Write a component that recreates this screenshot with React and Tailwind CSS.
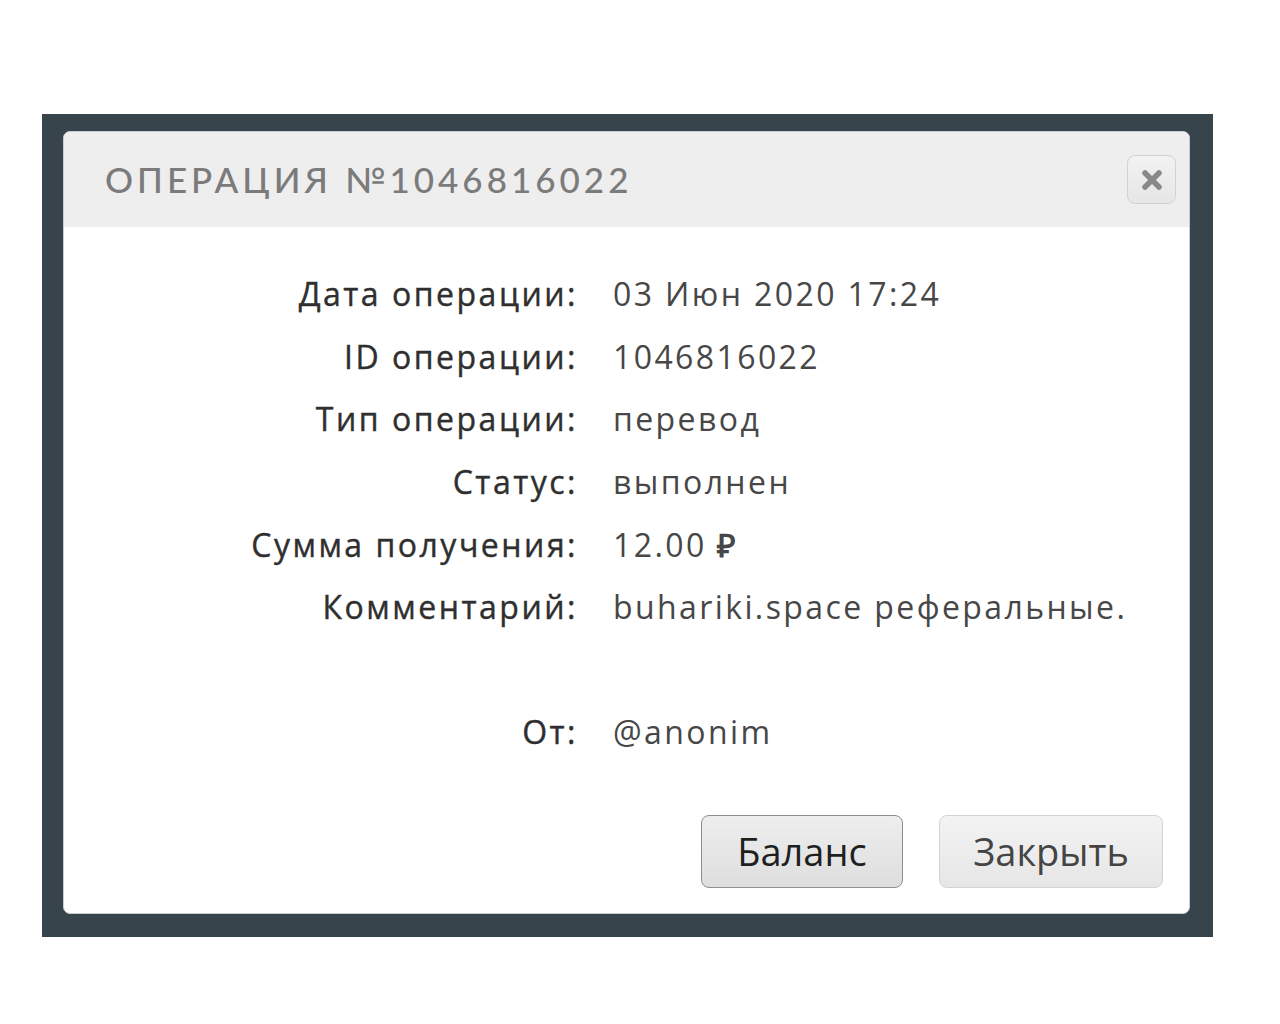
const rows = [
  ["Дата операции:", "03 Июн 2020 17:24"],
  ["ID операции:", "1046816022"],
  ["Тип операции:", "перевод"],
  ["Статус:", "выполнен"],
  ["Сумма получения:", <>12.00 <span className="font-bold">₽</span></>],
  ["Комментарий:", "buhariki.space реферальные."],
  ["", ""],
  ["От:", "@anonim"],
];

function CloseIcon() {
  return (
    <svg width="24" height="24" viewBox="0 0 24 24">
      <path d="M5 5 L19 19 M19 5 L5 19" stroke="#888888" strokeWidth="5.5" strokeLinecap="round" />
    </svg>
  );
}

export default function App() {
  return (
    <div className="w-[1280px] h-[1024px] bg-white pt-[114px] pl-[42px]">
      <div className="w-[1171px] h-[823px] bg-[#37444c] pt-[17px] pl-[21px]">
        <div className="w-[1127px] h-[783px] bg-white rounded-[7px] border border-[#c9cdd0] overflow-hidden flex flex-col">
          {/* header */}
          <div className="h-[95px] bg-[#eeeeef] flex items-center justify-between pl-[41px] pr-[13px]">
            <h1
              className="text-[35px] text-[#7b7b7b] tracking-[4px] font-medium"
              style={{ fontFamily: "Lato, 'Open Sans', sans-serif" }}
            >
              ОПЕРАЦИЯ №1046816022
            </h1>
            <button className="w-[49px] h-[49px] rounded-[8px] border border-[#d2d2d2] bg-gradient-to-b from-[#f2f2f2] to-[#e6e6e6] flex items-center justify-center">
              <CloseIcon />
            </button>
          </div>

          {/* details */}
          <div
            className="pt-[36px] grid grid-cols-[514px_1fr] gap-x-[35px]"
            style={{ fontFamily: "'Open Sans', sans-serif" }}
          >
            {rows.map(([label, value], i) => (
              <div key={i} className="contents">
                <div className="h-[62.6px] flex items-center justify-end text-[32px] tracking-[2.5px] text-[#2f2f2f] [-webkit-text-stroke:0.4px_#2f2f2f]">
                  {label}
                </div>
                <div className="h-[62.6px] flex items-center text-[32px] tracking-[2.4px] text-[#474747]">
                  <span>{value}</span>
                </div>
              </div>
            ))}
          </div>

          {/* buttons */}
          <div
            className="mt-auto flex justify-end gap-[36px] pr-[26px] pb-[25px]"
            style={{ fontFamily: "'Open Sans', sans-serif" }}
          >
            <button className="w-[202px] h-[73px] rounded-[8px] border border-[#8e8e8e] bg-gradient-to-b from-[#eeeeee] to-[#dedede] text-[38px] text-[#1f1f1f]">
              Баланс
            </button>
            <button className="w-[224px] h-[73px] rounded-[8px] border border-[#d3d3d3] bg-gradient-to-b from-[#f3f3f3] to-[#e6e6e6] text-[38px] text-[#444444]">
              Закрыть
            </button>
          </div>
        </div>
      </div>
    </div>
  );
}
